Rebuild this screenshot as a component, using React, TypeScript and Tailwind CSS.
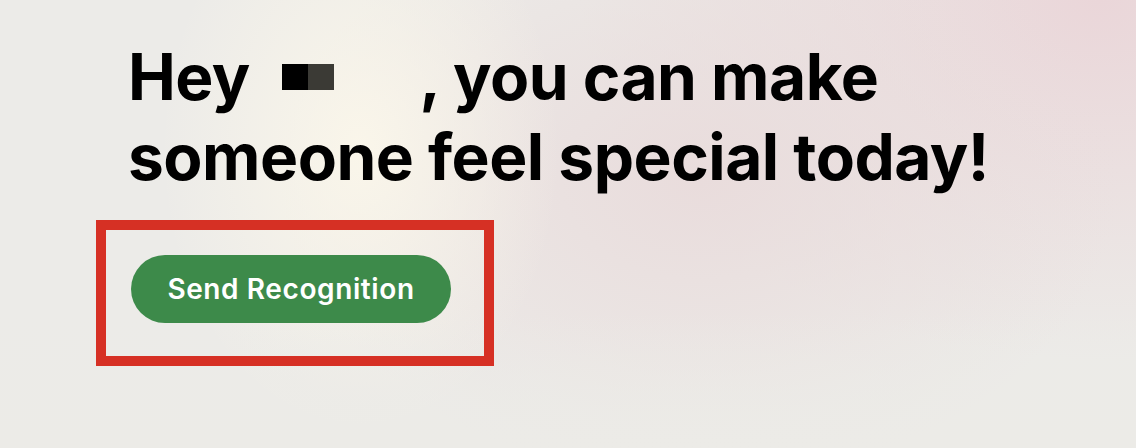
export default function App() {
  return (
    <div className="relative h-[448px] w-[1136px] overflow-hidden bg-[#ecebe8] font-['Inter',sans-serif]">
      {/* soft blurred backdrop */}
      <div className="pointer-events-none absolute inset-0 bg-[radial-gradient(ellipse_520px_360px_at_1100px_0px,#ead6d9_0%,#ead6d900_100%)]" />
      <div className="pointer-events-none absolute inset-0 bg-[radial-gradient(ellipse_420px_300px_at_700px_180px,#e9dcdc_0%,#e9dcdc00_100%)]" />
      <div className="pointer-events-none absolute inset-0 bg-[radial-gradient(ellipse_200px_280px_at_360px_150px,#faf6ea_0%,#faf6ea00_100%)]" />
      <div className="pointer-events-none absolute inset-0 bg-[linear-gradient(to_bottom,#00000000_70%,#ecebe7_100%)]" />

      <div className="relative flex flex-col pl-[96px] pt-[37px]">
        <h1 className="pl-[32px] text-[64px] font-bold leading-[80px] tracking-[-0.5px] text-black">
          Hey{" "}
          <span className="ml-[18px] inline-flex w-[137px] translate-y-[-6px] align-middle">
            <span className="h-[26px] w-[26px] bg-black" />
            <span className="h-[26px] w-[26px] bg-[#3b3a35]" />
          </span>
          , you can make
          <br />
          someone feel special today!
        </h1>

        <div className="mt-[23px] h-[146px] w-[398px] border-[10px] border-[#d63024] pl-[25px] pt-[25px]">
          <button
            type="button"
            className="flex h-[68px] w-[320px] items-center justify-center rounded-full bg-[#3d8a4a] text-[28px] font-semibold tracking-[0.6px] text-white"
          >
            Send Recognition
          </button>
        </div>
      </div>
    </div>
  );
}
